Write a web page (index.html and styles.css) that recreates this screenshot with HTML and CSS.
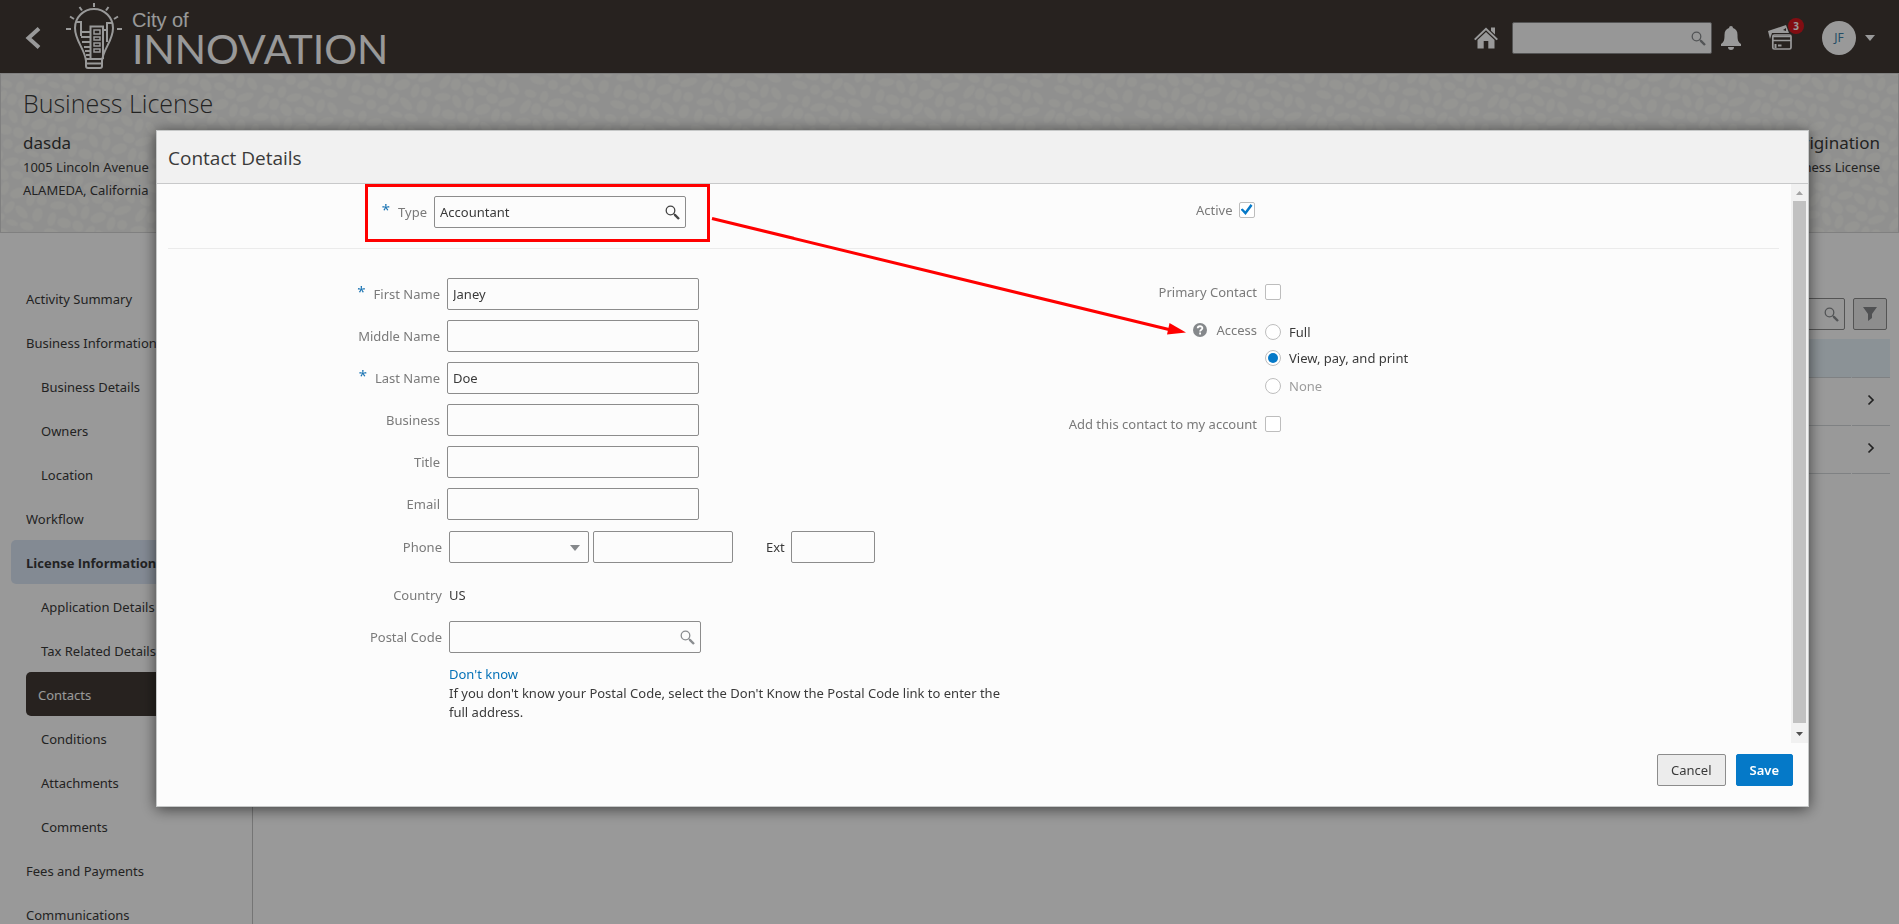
FILE: index.html
```html
<!DOCTYPE html>
<html lang="en">
<head>
<meta charset="utf-8">
<title>Business License - Contact Details</title>
<link rel="stylesheet" href="styles.css">
</head>
<body>
<svg class="defs" aria-hidden="true">
  <symbol id="magnifier" viewBox="0 0 16 16"><circle cx="5.500" cy="5.500" r="4.300" fill="none" stroke="currentColor" stroke-width="1.300"/><path d="M8.700 8.700L10 10" stroke="currentColor" stroke-width="1.200"/><path d="M9.600 9.600L14 14" stroke="currentColor" stroke-width="2.400"/></symbol>
  <symbol id="chevron" viewBox="0 0 8 12"><path d="M1.5 1.5L6 6L1.5 10.5" fill="none" stroke="currentColor" stroke-width="1.7"/></symbol>
</svg>

<div class="page">
  <header class="topbar">
    <button class="plain back" aria-label="Back"><svg width="16" height="22" viewBox="0 0 16 22"><path d="M14 1.5L3.500 11L14 20.500" fill="none" stroke="currentColor" stroke-width="4"/></svg></button>
    <div class="brand">
      <svg class="bulb" width="56" height="68" viewBox="0 0 56 68" fill="none" stroke="currentColor" stroke-width="2">
        <path d="M28 1v4M13.500 5l2.500 3.500M42.500 5L40 8.500M4 14.500l4 2.500M52 14.500L48 17M0 27h5M51 27h5"/>
        <path d="M20 59C19 47 9 39 9 26a19 19 0 0 1 38 0C47 39 37 47 36 59"/>
        <path d="M20 57h16v7q0 2-2 2H22q-2 0-2-2z M20 61.500h16"/>
        <path d="M10 20h5v14M46 21h-5v12M14 30h10M15 35h9M16 40h8M18 45h6M19 49h5M20 53h4"/>
        <path d="M24.500 57V24.500H37V57M37 28h4v12"/>
        <path d="M28 28h6v4h-6zM28 35h6v3h-6zM28 41h6v3h-6zM28 47h6v3h-6z" stroke-width="1.500"/>
      </svg>
      <div class="brand-text"><span class="brand-small">City of</span><span class="brand-large">INNOVATION</span></div>
    </div>
    <div class="tools">
      <a class="home" href="#" aria-label="Home"><svg width="26" height="24" viewBox="0 0 26 24" fill="currentColor"><path d="M1 13L13 1.500L25 13L23.500 14.300L13 4.300L2.500 14.300z"/><path d="M18 1.500h4v7l-4-3.800z"/><path d="M13 6l8.500 8v8.500H15.300V15h-4.600v7.500H4.500V14z"/></svg></a>
      <div class="search top-search"><input type="text" aria-label="Search"><svg width="16" height="16"><use href="#magnifier"/></svg></div>
      <button class="plain bell" aria-label="Notifications"><svg width="20" height="24" viewBox="0 0 20 24" fill="currentColor"><path d="M8 2q0-2 2-2t2 2c3 1 4.500 3 4.500 7 0 5 .5 7 3.500 9v2H0v-2c3-2 3.500-4 3.500-9C3.500 5 5 3 8 2zM7 21h6q0 3-3 3t-3-3z"/></svg></button>
      <button class="plain cart" aria-label="Payments, 3 items"><svg width="24" height="25" viewBox="0 0 24 25" fill="none" stroke="currentColor"><path d="M0 6L18 0l3 8H4l-2 6z" fill="currentColor" stroke="none"/><path d="M15 5l3-2v3z" fill="#413a35" stroke="none"/><rect x="4.800" y="10" width="18.200" height="14" rx="1.500" stroke-width="1.700"/><path d="M5 11.500h18M5 15.500h18" stroke-width="1.500"/><path d="M7.500 19v4M10 20.500h3.500" stroke-width="2"/></svg><span class="badge">3</span></button>
      <button class="plain account" aria-label="Account"><span class="avatar">JF</span><span class="caret"></span></button>
    </div>
  </header>

  <section class="banner">
    <svg class="pebbles" aria-hidden="true">
      <defs><pattern id="pebble" width="84" height="72" patternUnits="userSpaceOnUse" patternTransform="rotate(17)">
        <g fill="#f8f8f4">
          <ellipse cx="8" cy="8" rx="6" ry="4"/><ellipse cx="22" cy="7" rx="4" ry="6"/><ellipse cx="35" cy="9" rx="8" ry="4" transform="rotate(-30 35 9)"/><ellipse cx="50" cy="8" rx="7" ry="4" transform="rotate(25 50 8)"/><ellipse cx="63" cy="9" rx="4" ry="7"/><ellipse cx="75" cy="8" rx="7" ry="4" transform="rotate(40 75 8)"/>
          <ellipse cx="7" cy="22" rx="4" ry="8" transform="rotate(20 7 22)"/><ellipse cx="18" cy="21" rx="5" ry="6"/><ellipse cx="31" cy="23" rx="7" ry="5" transform="rotate(35 31 23)"/><ellipse cx="45" cy="20" rx="6" ry="4"/><ellipse cx="57" cy="24" rx="6" ry="5"/><ellipse cx="72" cy="23" rx="9" ry="4" transform="rotate(-35 72 23)"/>
          <ellipse cx="9" cy="37" rx="8" ry="4" transform="rotate(-20 9 37)"/><ellipse cx="24" cy="37" rx="7" ry="4" transform="rotate(50 24 37)"/><ellipse cx="37" cy="36" rx="4" ry="7"/><ellipse cx="51" cy="37" rx="8" ry="5" transform="rotate(-35 51 37)"/><ellipse cx="65" cy="39" rx="4" ry="7"/><ellipse cx="76" cy="37" rx="5" ry="5"/>
          <ellipse cx="7" cy="52" rx="4" ry="7"/><ellipse cx="20" cy="52" rx="7" ry="5"/><ellipse cx="34" cy="51" rx="6" ry="5" transform="rotate(30 34 51)"/><ellipse cx="47" cy="53" rx="4" ry="7" transform="rotate(20 47 53)"/><ellipse cx="60" cy="54" rx="8" ry="4" transform="rotate(30 60 54)"/><ellipse cx="76" cy="52" rx="5" ry="7"/>
          <ellipse cx="11" cy="65" rx="8" ry="4"/><ellipse cx="27" cy="65" rx="5" ry="5"/><ellipse cx="40" cy="66" rx="6" ry="4" transform="rotate(-40 40 66)"/><ellipse cx="54" cy="67" rx="6" ry="3"/><ellipse cx="69" cy="66" rx="7" ry="4"/>
        </g></pattern></defs>
      <rect width="100%" height="100%" fill="url(#pebble)"/>
    </svg>
    <div class="banner-main">
      <h1>Business License</h1>
      <p class="lead">dasda</p><p>1005 Lincoln Avenue</p><p>ALAMEDA, California</p>
    </div>
    <div class="banner-side"><p class="lead">Origination</p><p>Business License</p></div>
  </section>

  <div class="columns">
    <nav class="sidebar">
      <a href="#">Activity Summary</a>
      <a href="#">Business Information</a>
      <a href="#" class="sub">Business Details</a>
      <a href="#" class="sub">Owners</a>
      <a href="#" class="sub">Location</a>
      <a href="#">Workflow</a>
      <a href="#" class="current">License Information</a>
      <a href="#" class="sub">Application Details</a>
      <a href="#" class="sub">Tax Related Details</a>
      <a href="#" class="sub active">Contacts</a>
      <a href="#" class="sub">Conditions</a>
      <a href="#" class="sub">Attachments</a>
      <a href="#" class="sub">Comments</a>
      <a href="#">Fees and Payments</a>
      <a href="#">Communications</a>
    </nav>
    <main class="list">
      <div class="list-tools">
        <div class="search list-search"><input type="text" aria-label="Search contacts"><svg width="16" height="16"><use href="#magnifier"/></svg></div>
        <button class="filter" aria-label="Filter"><svg width="14" height="14" viewBox="0 0 14 14" fill="currentColor"><path d="M0 0h14L9 7v4l-4 3V7z"/></svg></button>
      </div>
      <div class="row head"><span></span><span></span></div>
      <div class="row"><span></span><span class="go"><svg width="8" height="12"><use href="#chevron"/></svg></span></div>
      <div class="row"><span></span><span class="go"><svg width="8" height="12"><use href="#chevron"/></svg></span></div>
    </main>
  </div>
</div>

<div class="overlay">
  <form class="dialog" role="dialog" aria-labelledby="dialog-title">
    <h2 id="dialog-title">Contact Details</h2>
    <div class="dialog-body">
      <div class="fields">
        <div class="type-row">
          <div class="field">
            <label class="label" for="type"><span class="required">*</span>Type</label>
            <div class="search wide dark"><input id="type" type="text" value="Accountant"><svg width="16" height="16"><use href="#magnifier"/></svg></div>
          </div>
          <div class="field check-field"><label class="label" for="active">Active</label><input id="active" type="checkbox" checked></div>
        </div>
        <div class="details">
          <div class="stack">
            <div class="field"><label class="label" for="first"><span class="required">*</span>First Name</label><input id="first" class="wide" type="text" value="Janey"></div>
            <div class="field"><label class="label" for="middle">Middle Name</label><input id="middle" class="wide" type="text"></div>
            <div class="field"><label class="label" for="last"><span class="required">*</span>Last Name</label><input id="last" class="wide" type="text" value="Doe"></div>
            <div class="field"><label class="label" for="business">Business</label><input id="business" class="wide" type="text"></div>
            <div class="field"><label class="label" for="jobtitle">Title</label><input id="jobtitle" class="wide" type="text"></div>
            <div class="field"><label class="label" for="email">Email</label><input id="email" class="wide" type="text"></div>
            <div class="address">
              <div class="field">
                <label class="label" for="phone-type">Phone</label>
                <div class="phone">
                  <span class="select"><select id="phone-type"><option></option></select><span class="caret"></span></span>
                  <input class="number" type="text" aria-label="Phone number">
                  <label class="ext" for="ext">Ext</label><input id="ext" class="extension" type="text">
                </div>
              </div>
              <div class="field country"><span class="label">Country</span><span class="value">US</span></div>
              <div class="field"><label class="label" for="postal">Postal Code</label>
                <div class="search wide"><input id="postal" type="text"><svg width="16" height="16"><use href="#magnifier"/></svg></div></div>
              <div class="help"><a href="#">Don't know</a><p>If you don't know your Postal Code, select the Don't Know the Postal Code link to enter the full address.</p></div>
            </div>
          </div>
          <div class="options">
            <div class="field check-field"><label class="label" for="primary">Primary Contact</label><input id="primary" type="checkbox"></div>
            <div class="field access">
              <span class="label" id="access-label"><svg class="question" width="14" height="14" viewBox="0 0 14 14"><circle cx="7" cy="7" r="7" fill="#85888b"/><path d="M4.700 5.300C4.700 2.600 9.500 2.600 9.400 5.200C9.300 6.700 7.100 6.700 7.100 8.500M7.100 9.600v1.900" fill="none" stroke="#fff" stroke-width="1.800"/></svg>Access</span>
              <div class="radios" role="radiogroup" aria-labelledby="access-label">
                <label><input type="radio" name="access">Full</label>
                <label><input type="radio" name="access" checked>View, pay, and print</label>
                <label class="disabled"><input type="radio" name="access" disabled>None</label>
              </div>
            </div>
            <div class="field check-field"><label class="label" for="add">Add this contact to my account</label><input id="add" type="checkbox"></div>
          </div>
        </div>
      </div>
      <div class="scrollbar" aria-hidden="true">
        <svg width="17" height="17"><path d="M5 11l3.500-4L12 11z" fill="#a3a3a3"/></svg>
        <span class="thumb"></span>
        <svg width="17" height="20"><path d="M5 9h7l-3.500 4z" fill="#505050"/></svg>
      </div>
    </div>
    <footer class="actions"><button type="button">Cancel</button><button type="button" class="primary">Save</button></footer>
    <svg class="annotation" aria-hidden="true" fill="none" stroke="#f00">
      <rect x="209.500" y="54.500" width="342" height="55" stroke-width="3"/>
      <path d="M555 87.500L1014 199" stroke-width="3"/>
      <path d="M1012.500 192L1029 201.500L1010 203.500z" fill="#f00" stroke="none"/>
    </svg>
  </form>
</div>
</body>
</html>
```
FILE: styles.css
```css
* { box-sizing: border-box; }
body {
  margin: 0;
  height: 100vh;
  overflow: hidden;
  background: #fff;
  color: #3a3a3a;
  font: 13px/20px "Noto Sans", "Open Sans", sans-serif;
}
h1, h2, p { margin: 0; font-weight: 400; }
a { color: inherit; text-decoration: none; }
button, input, select { font: inherit; color: inherit; margin: 0; }
svg { display: block; flex: none; }
.defs { display: none; }
.page { height: 100vh; overflow: hidden; display: flex; flex-direction: column; }

.plain { border: 0; padding: 0; background: none; color: inherit; display: flex; align-items: center; }
input[type="text"], select {
  height: 32px;
  min-width: 0;
  padding: 0 5px;
  border: 1px solid #8c8c8c;
  border-radius: 2px;
  background: #fcfcfc;
}
.search { display: flex; position: relative; color: #8a8d90; }
.search input { width: 100%; color: #3a3a3a; }
.search svg { position: absolute; right: 5px; top: 9px; }
.search.dark { color: #444; }
.caret { border: 5px solid transparent; border-top: 6px solid currentColor; border-bottom: 0; }

/* Top bar */
.topbar { flex: none; height: 73px; display: flex; align-items: center; padding: 2px 24px 0 25px; background: #413a35; color: #fff; }
.brand { display: flex; margin-left: 25px; gap: 10px; padding-bottom: 4px; align-items: center; }
.brand-text { display: flex; flex-direction: column; padding-top: 5px; }
.brand-small { font: 20px/22px "Liberation Sans", Arial, sans-serif; }
.brand-large { font: 41px/36px Lato, sans-serif; }
.tools { display: flex; align-items: center; margin-left: auto; }
.top-search { width: 200px; margin: 0 9px 0 13px; }
.bell { margin-right: 27px; }
.cart { position: relative; margin-right: 30px; }
.badge {
  position: absolute; left: 20px; top: -7px;
  width: 16px; height: 16px; border-radius: 8px;
  background: #d8171f; font: 700 10px/16px "Open Sans", sans-serif; text-align: center;
}
.account { gap: 9px; }
.avatar { width: 34px; height: 34px; border-radius: 17px; background: #fff; color: #3c82aa; font-size: 12px; line-height: 34px; }

/* Banner */
.banner {
  flex: none; height: 160px; position: relative;
  display: flex; justify-content: space-between; align-items: flex-start;
  padding: 15px 18px 0 22px;
  border: 1px solid #d6d6d6;
  background: #f1f1ef;
}
.pebbles { position: absolute; inset: 0; width: 100%; height: 100%; }
.banner-main, .banner-side { position: relative; }
.banner h1 { font-family: "Open Sans", sans-serif; font-size: 25px; line-height: 28px; font-weight: 300; margin-bottom: 13px; }
.banner p { line-height: 23px; }
.banner .lead { font-size: 17px; line-height: 26px; }
.banner-side { padding-top: 41px; text-align: right; }

/* Navigation and list */
.columns { flex: 1; display: flex; min-height: 0; }
.sidebar { flex: none; width: 253px; padding: 43px 0 0 11px; border-right: 1px solid #c4c4c4; }
.sidebar a { display: block; height: 44px; line-height: 46px; padding-left: 15px; border-radius: 5px; }
.sidebar .sub { padding-left: 30px; }
.sidebar .current { background: #dbe6f6; font-family: "Open Sans", sans-serif; font-weight: 700; }
.sidebar .active { margin-left: 15px; padding-left: 12px; background: #413a35; color: #fff; }
.list { flex: 1; padding: 65px 9px 0 20px; }
.list-tools { display: flex; justify-content: flex-end; gap: 8px; padding-right: 3px; margin-bottom: 9px; }
.list-search { width: 220px; }
.filter { width: 34px; height: 32px; padding: 0 9px; border: 1px solid #8c8c8c; border-radius: 2px; background: #ececec; color: #85888b; }
.row { display: grid; grid-template-columns: 1fr 38px; column-gap: 1px; height: 48px; }
.row.head { height: 39px; background: #e8f3fa; }
.row span { border-bottom: 1px solid #d4d8da; }
.row .go { display: flex; align-items: center; padding: 0 0 3px 15px; }

/* Dialog */
.overlay { position: fixed; inset: 0; padding: 130px 90px 0 156px; background: rgba(0, 0, 0, 0.4); }
.dialog {
  position: relative;
  border: 1px solid #c6c8c8;
  background: #fcfcfc;
  box-shadow: 0 2px 14px rgba(0, 0, 0, 0.6);
}
.dialog h2 { padding: 15px 11px 13px; font-family: "Open Sans", sans-serif; font-size: 19px; line-height: 24px; background: #f1f1f1; border-bottom: 1px solid #c8c9ca; }
.dialog-body { display: flex; }
.fields { flex: 1; height: 559px; }
.type-row { display: grid; grid-template-columns: minmax(0, 1fr) minmax(0, 1fr); align-items: start; height: 65px; margin: 0 12px 0 11px; padding-top: 12px; border-bottom: 1px solid #ebebeb; }
.field { display: flex; align-items: center; gap: 7px; }
.label { flex: none; width: 283px; text-align: right; color: #7a7a7a; position: relative; }
.type-row .label { width: 259px; }
.required { color: #1b74b3; font-size: 15px; line-height: 10px; vertical-align: 2px; margin-right: 8px; }
.wide { width: 252px; }
.details { display: grid; grid-template-columns: minmax(0, 1fr) minmax(0, 1fr); padding-top: 29px; }
.stack { display: flex; flex-direction: column; gap: 10px; }
.address { display: flex; flex-direction: column; padding-top: 1px; }
.address .label { width: 285px; }
.address .field { height: 32px; }
.address .country { height: 58px; padding-top: 6px; }
.phone { display: flex; align-items: center; gap: 4px; }
.select { position: relative; display: flex; color: #85888b; }
.select select { width: 140px; appearance: none; }
.select .caret { position: absolute; right: 9px; top: 14px; }
.number { width: 140px; }
.ext { margin: 0 2px 0 29px; }
.extension { width: 84px; }
.help { width: 860px; padding: 12px 0 0 292px; line-height: 19px; }
.help a { color: #0572b8; }
.check-field { gap: 8px; }
.type-row .check-field { gap: 6px; height: 27px; }
.options { padding-top: 4px; }
.options .check-field { height: 20px; }
.access { align-items: flex-start; gap: 8px; margin: 18px 0 14px; }
.question { position: absolute; right: 50px; top: 3px; }
.radios label { display: flex; align-items: center; gap: 8px; height: 28px; }
.radios label:first-child { height: 24px; }
.disabled { color: #9c9c9c; }
input[type="checkbox"], input[type="radio"] {
  appearance: none; width: 16px; height: 16px;
  border: 1px solid #bdbdbd; border-radius: 2px; background: #fff;
  display: grid; place-items: center;
}
input[type="radio"] { border-radius: 8px; }
input[type="radio"]:checked::before { content: ""; width: 10px; height: 10px; border-radius: 5px; background: #0579c8; }
input[type="checkbox"]:checked::before {
  content: ""; width: 12px; height: 11px; background: #0579c8;
  clip-path: polygon(0 50%, 18% 40%, 40% 65%, 84% 0, 100% 16%, 42% 100%);
}
.scrollbar { width: 17px; background: #f1f1f1; display: flex; flex-direction: column; }
.thumb { flex: 1; margin: 0 2px; background: #c1c1c1; }
.actions { display: flex; justify-content: flex-end; gap: 10px; padding: 11px 15px 20px; }
.actions button { height: 32px; padding: 0 13px; border: 1px solid #8c8c8c; border-radius: 2px; background: #ececec; }
.actions .primary { border-color: #0579c8; background: #0579c8; color: #fff; font-weight: 600; }
.annotation { position: absolute; left: 0; top: 0; width: 100%; height: 100%; pointer-events: none; }
```
